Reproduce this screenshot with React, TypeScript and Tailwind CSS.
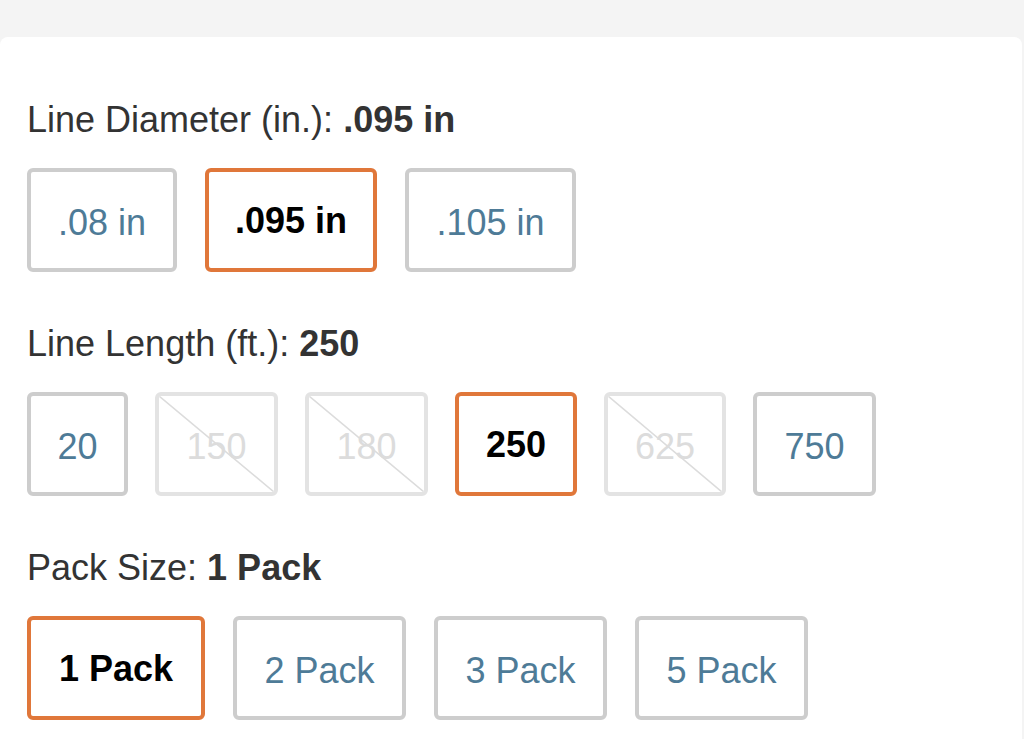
type Option = {
  label: string;
  width: string;
  state?: 'selected' | 'disabled';
};

type Group = {
  title: string;
  value: string;
  gap: string;
  options: Option[];
};

const groups: Group[] = [
  {
    title: 'Line Diameter (in.):',
    value: '.095 in',
    gap: 'gap-7',
    options: [
      { label: '.08 in', width: 'w-[150px]' },
      { label: '.095 in', width: 'w-[172px]', state: 'selected' },
      { label: '.105 in', width: 'w-[171px]' },
    ],
  },
  {
    title: 'Line Length (ft.):',
    value: '250',
    gap: 'gap-[27px]',
    options: [
      { label: '20', width: 'w-[101px]' },
      { label: '150', width: 'w-[123px]', state: 'disabled' },
      { label: '180', width: 'w-[123px]', state: 'disabled' },
      { label: '250', width: 'w-[122px]', state: 'selected' },
      { label: '625', width: 'w-[122px]', state: 'disabled' },
      { label: '750', width: 'w-[123px]' },
    ],
  },
  {
    title: 'Pack Size:',
    value: '1 Pack',
    gap: 'gap-7',
    options: [
      { label: '1 Pack', width: 'w-[178px]', state: 'selected' },
      { label: '2 Pack', width: 'w-[173px]' },
      { label: '3 Pack', width: 'w-[173px]' },
      { label: '5 Pack', width: 'w-[173px]' },
    ],
  },
];

function Swatch({ option }: { option: Option }) {
  if (option.state === 'selected') {
    return (
      <button className={`${option.width} flex h-[104px] items-center justify-center rounded-[6px] border-4 border-[#e0773a] bg-white pt-[2px] text-[36px] font-bold text-black`}>
        {option.label}
      </button>
    );
  }
  if (option.state === 'disabled') {
    return (
      <button
        disabled
        className={`${option.width} relative flex h-[104px] items-center justify-center overflow-hidden rounded-[6px] border-4 border-[#e3e3e3] bg-white pt-[5px] text-[36px] text-[#dcdcdc]`}
      >
        {option.label}
        <svg className="absolute inset-0 h-full w-full" preserveAspectRatio="none" viewBox="0 0 100 100">
          <line x1="0" y1="0" x2="100" y2="100" stroke="#dcdcdc" strokeWidth="1.6" vectorEffect="non-scaling-stroke" />
        </svg>
      </button>
    );
  }
  return (
    <button className={`${option.width} flex h-[104px] items-center justify-center rounded-[6px] border-4 border-[#cdcdcd] bg-white pt-[5px] text-[36px] text-[#4e7b97]`}>
      {option.label}
    </button>
  );
}

export default function App() {
  return (
    <div className="min-h-[739px] bg-[#f4f4f4] pt-[37px] font-['Liberation_Sans',Arial,sans-serif]">
      <div className="mr-[2px] flex min-h-[702px] flex-col gap-[52px] rounded-t-[8px] bg-white pl-[27px] pt-[63px]">
        {groups.map((group) => (
          <section key={group.title} className="flex flex-col gap-7">
            <h3 className="text-[36px] leading-[40px] text-[#333333]">
              {group.title} <span className="font-bold">{group.value}</span>
            </h3>
            <div className={`flex ${group.gap}`}>
              {group.options.map((option) => (
                <Swatch key={option.label} option={option} />
              ))}
            </div>
          </section>
        ))}
      </div>
    </div>
  );
}
